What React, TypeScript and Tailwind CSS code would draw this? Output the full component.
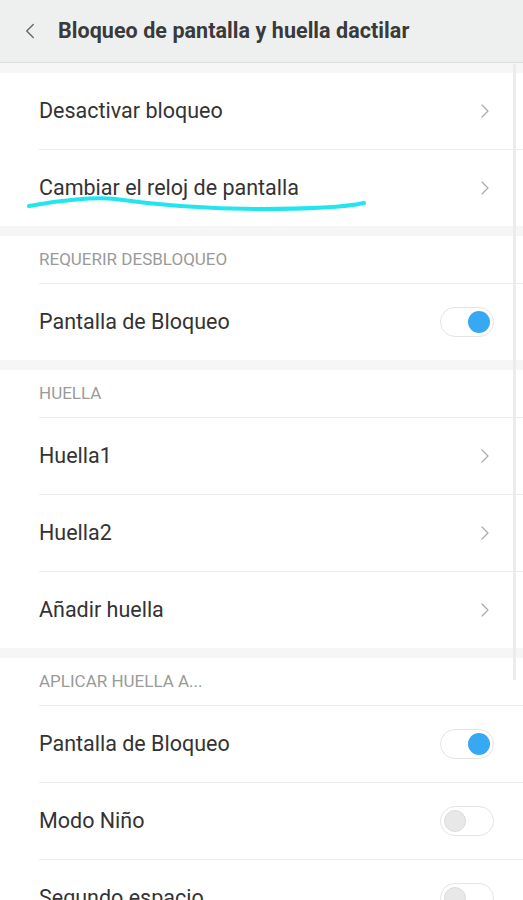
import { ChevronLeft, ChevronRight } from 'lucide-react'

type Row =
  | { kind: 'link'; label: string }
  | { kind: 'toggle'; label: string; on: boolean }

interface Section {
  title?: string
  rows: Row[]
}

const sections: Section[] = [
  {
    rows: [
      { kind: 'link', label: 'Desactivar bloqueo' },
      { kind: 'link', label: 'Cambiar el reloj de pantalla' },
    ],
  },
  {
    title: 'REQUERIR DESBLOQUEO',
    rows: [{ kind: 'toggle', label: 'Pantalla de Bloqueo', on: true }],
  },
  {
    title: 'HUELLA',
    rows: [
      { kind: 'link', label: 'Huella1' },
      { kind: 'link', label: 'Huella2' },
      { kind: 'link', label: 'Añadir huella' },
    ],
  },
  {
    title: 'APLICAR HUELLA A...',
    rows: [
      { kind: 'toggle', label: 'Pantalla de Bloqueo', on: true },
      { kind: 'toggle', label: 'Modo Niño', on: false },
      { kind: 'toggle', label: 'Segundo espacio', on: false },
    ],
  },
]

function Toggle({ on }: { on: boolean }) {
  return (
    <div
      className={`flex h-[30px] w-[54px] items-center rounded-full border border-[#e4e4e4] bg-white px-[3px] ${
        on ? 'justify-end' : 'justify-start'
      }`}
    >
      <div
        className={`h-[22px] w-[22px] rounded-full ${
          on ? 'bg-[#37a9f2]' : 'border border-[#dcdcdc] bg-[#e8e8e8]'
        }`}
      />
    </div>
  )
}

export default function App() {
  return (
    <div className="relative h-[900px] w-[523px] overflow-hidden bg-[#f6f6f6] font-['Roboto','Noto_Sans',sans-serif]">
      <header className="flex h-[62px] box-content items-center border-b border-[#dedede] bg-[#eef0f0]">
        <ChevronLeft className="ml-[17px] h-[26px] w-[26px] text-[#666]" strokeWidth={1.3} />
        <h1 className="ml-[15px] text-[21.5px] font-bold tracking-[0.05px] text-[#3a3a3a]">
          Bloqueo de pantalla y huella dactilar
        </h1>
      </header>

      <div className="flex flex-col gap-[10px] pt-[10px]">
        {sections.map((section, si) => (
          <div key={si} className="bg-white pl-[39px]">
            {section.title && (
              <div className="box-content flex h-[47px] items-center border-b border-[#ececec] text-[17px] text-[#9a9a9a]">
                {section.title}
              </div>
            )}
            {section.rows.map((row, ri) => (
              <div
                key={ri}
                className={`box-content flex h-[76px] items-center justify-between pr-[29px] ${
                  ri < section.rows.length - 1 ? 'border-b border-[#ececec]' : ''
                }`}
              >
                <span className="text-[21.5px] text-[#333]">{row.label}</span>
                {row.kind === 'link' ? (
                  <ChevronRight className="mr-[-3px] h-[24px] w-[24px] text-[#aaa]" strokeWidth={1.2} />
                ) : (
                  <Toggle on={row.on} />
                )}
              </div>
            ))}
          </div>
        ))}
      </div>

      {/* scroll indicator */}
      <div className="absolute right-[7px] top-[64px] h-[616px] w-[3px] bg-[#ececec]" />

      {/* hand-drawn highlight under the clock option */}
      <svg className="absolute left-0 top-[190px]" width="380" height="30" viewBox="0 0 380 30">
        <path
          d="M29 16 C 60 10, 95 7, 115 9 C 150 14, 200 19, 260 19 C 310 19, 345 17, 364 13"
          fill="none"
          stroke="#22e6ee"
          strokeWidth="4"
          strokeLinecap="round"
        />
      </svg>
    </div>
  )
}
